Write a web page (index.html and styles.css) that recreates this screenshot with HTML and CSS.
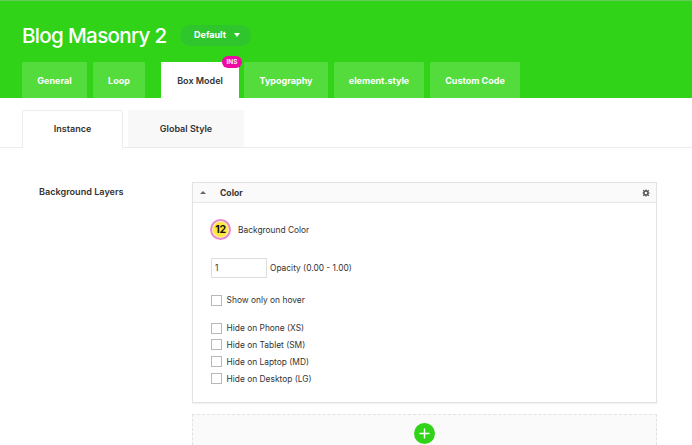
FILE: index.html
```html
<!DOCTYPE html>
<html lang="en">
<head>
<meta charset="utf-8">
<title>Blog Masonry 2</title>
<link rel="stylesheet" href="styles.css">
</head>
<body>
<header class="header">
  <div class="title-row">
    <h1 class="title">Blog Masonry 2</h1>
    <button class="preset">Default <span class="caret"></span></button>
  </div>
  <nav class="tabs">
    <a class="tab general">General</a>
    <a class="tab loop">Loop</a>
    <a class="tab box active">Box Model<span class="badge">INS</span></a>
    <a class="tab typography">Typography</a>
    <a class="tab element">element.style</a>
    <a class="tab custom">Custom Code</a>
  </nav>
</header>
<nav class="subtabs">
  <a class="subtab current">Instance</a>
  <a class="subtab global">Global Style</a>
</nav>
<main class="content">
  <h2 class="section-title"><span>Background Layers</span></h2>
  <div class="layers">
    <section class="panel">
      <header class="panel-head">
        <span class="arrow-up"></span>
        <h3 class="panel-title">Color</h3>
        <svg class="gear" viewBox="0 0 16 16"><circle cx="8" cy="8" r="4" fill="none" stroke="currentColor" stroke-width="2.8"/><path d="M8 1v3M8 12v3M1 8h3M12 8h3M2.5 2.5l3 3M10.5 10.5l3 3M2.5 13.5l3-3M10.5 5.5l3-3" stroke="currentColor" stroke-width="2.4"/></svg>
      </header>
      <div class="panel-body">
        <div class="color-row"><span class="swatch">12</span><span>Background Color</span></div>
        <label class="opacity-row"><input class="number" type="text" value="1"><span class="opacity-label">Opacity (0.00 - 1.00)</span></label>
        <label class="check hover"><input type="checkbox"><span>Show only on hover</span></label>
        <div class="checks">
          <label class="check"><input type="checkbox"><span>Hide on Phone (XS)</span></label>
          <label class="check"><input type="checkbox"><span>Hide on Tablet (SM)</span></label>
          <label class="check"><input type="checkbox"><span>Hide on Laptop (MD)</span></label>
          <label class="check"><input type="checkbox"><span>Hide on Desktop (LG)</span></label>
        </div>
      </div>
    </section>
    <div class="add-area">
      <button class="add" aria-label="Add layer"><svg viewBox="0 0 21 21"><path d="M10.5 5.5v10M5.5 10.5h10" stroke="#fff" stroke-width="1.4"/></svg></button>
    </div>
  </div>
</main>
</body>
</html>
```
FILE: styles.css
```css
* { box-sizing: border-box; }
body {
  margin: 0;
  background: #fff;
  color: #333;
  font: 8.4px/16px Inter, "Liberation Sans", sans-serif;
}
h1, h2, h3 { margin: 0; }
button { border: 0; padding: 0; font: inherit; }
.header {
  height: 98px;
  padding-left: 22px;
  background: #30d317;
  border-top: 1px solid #66cb59;
}
.title-row { display: flex; align-items: center; height: 61px; padding-top: 7px; }
.title {
  width: 158px;
  padding-top: 1px;
  color: #fff;
  font-size: 20.6px;
  line-height: 28px;
  font-weight: 500;
  letter-spacing: -0.68px;
  white-space: nowrap;
}
.preset {
  display: flex;
  align-items: center;
  justify-content: center;
  gap: 8px;
  width: 71px;
  height: 21px;
  padding-left: 3px;
  border-radius: 11px;
  background: #2fc52c;
  color: #fff;
  font-size: 9px;
  font-weight: 700;
}
.caret { border: 3px solid transparent; border-top: 4px solid #fff; border-bottom: 0; }
.tabs { display: flex; }
.tab {
  position: relative;
  height: 36px;
  margin-right: 6px;
  border-radius: 1px 1px 0 0;
  background: #53dc3b;
  color: #fff;
  font-size: 9px;
  font-weight: 700;
  line-height: 37px;
  text-align: center;
  white-space: nowrap;
}
.tab.active { background: #fff; color: #333; font-weight: 600; margin-right: 5px; }
.general { width: 65px; }
.loop { width: 52px; }
.box { width: 78px; margin-left: 10px; }
.typography { width: 84px; }
.element { width: 90px; }
.custom { width: 90px; }
.badge {
  position: absolute;
  top: -6px;
  right: -3px;
  width: 20px;
  height: 12px;
  border-radius: 6px;
  background: #ee0aa3;
  color: #fff;
  font-size: 6.5px;
  font-weight: 600;
  line-height: 12px;
}
.subtabs {
  display: flex;
  height: 50px;
  padding: 12px 0 0 22px;
  border-bottom: 1px solid #ececec;
}
.subtab {
  height: 37px;
  font-size: 9px;
  font-weight: 600;
  line-height: 38px;
  text-align: center;
}
.current {
  width: 101px;
  height: 38px;
  margin-right: 5px;
  border: 1px solid #ececec;
  border-bottom: 0;
  border-radius: 2px 2px 0 0;
  background: #fff;
  line-height: 36px;
}
.global { width: 116px; background: #f8f8f8; }
.content { display: flex; padding-top: 34px; }
.section-title { width: 192px; padding: 2px 0 0 39px; font-size: 9.1px; font-weight: 600; }
.layers { width: 465px; }
.panel { height: 221px; border: 1px solid #e3e3e3; box-shadow: 0 1px 1px #f3f3f3; }
.panel-head {
  display: flex;
  align-items: center;
  height: 20px;
  padding: 0 6px 0 7px;
  border-bottom: 1px solid #e6e6e6;
  background: #fafafa;
}
.arrow-up { margin-right: 14px; border: 3px solid transparent; border-bottom: 3px solid #666; border-top: 0; }
.panel-title { flex: 1; font-size: 8.6px; font-weight: 700; line-height: 20px; }
.gear { width: 8px; height: 8px; color: #555; }
.panel-body { padding: 16px 0 0 17px; }
.color-row { display: flex; align-items: center; height: 21px; gap: 7px; }
.swatch {
  width: 21px;
  height: 21px;
  border: 2px solid #e68ad4;
  border-radius: 50%;
  background: #ffe83f;
  box-shadow: inset 0 0 0 1px #fff3c0;
  color: #111;
  font-size: 10.5px;
  font-weight: 700;
  line-height: 17px;
  text-align: center;
  letter-spacing: -0.2px;
}
.opacity-row { display: flex; align-items: center; height: 20px; margin-top: 18px; }
.number {
  width: 56px;
  height: 20px;
  margin: 0 3px 0 1px;
  padding: 0 3px;
  border: 1px solid #dedede;
  color: #333;
  font: inherit;
}
.check { display: flex; align-items: center; height: 16.8px; gap: 5px; padding-left: 0.6px; }
.check input {
  appearance: none;
  width: 11px;
  height: 11px;
  margin: 0;
  border: 1px solid #b8b8b8;
  background: #fff;
}
.hover { margin-top: 14px; }
.checks { margin-top: 11px; }
.add-area {
  display: flex;
  justify-content: center;
  height: 31px;
  margin-top: 11px;
  padding-top: 8px;
  border: 1px dashed #e2e2e2;
  border-bottom: 0;
  background: #fafafa;
}
.add { width: 21px; height: 21px; border-radius: 50%; background: #30d317; }
.add svg { display: block; width: 21px; height: 21px; }
```
